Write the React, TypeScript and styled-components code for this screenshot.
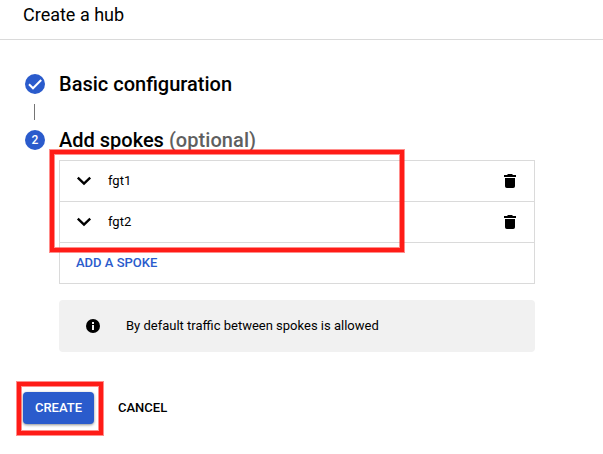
import React from "react";
import styled, { createGlobalStyle } from "styled-components";

const Global = createGlobalStyle`
  * { box-sizing: border-box; }
  body { margin: 0; background: #fff; color: #000; font-family: Roboto, sans-serif; font-size: 13px; overflow: hidden; -webkit-font-smoothing: antialiased; }
`;
const Page = styled.div`
  height: 454px;
  display: flex;
  flex-direction: column;
`;
const Header = styled.header`
  height: 40px;
  flex: none;
  padding: 3px 0 0 23px;
  border-bottom: 1px solid #dadada;
  font-size: 18px;
  line-height: 24px;
`;
const Stepper = styled.main`
  padding: 34px 68px 0 25px;
`;
const Step = styled.div`
  display: flex;
  align-items: center;
  gap: 14px;
  height: 20px;
`;
const Badge = styled.span`
  display: flex;
  align-items: center;
  justify-content: center;
  width: 20px;
  height: 20px;
  border-radius: 50%;
  background: #2a5bcc;
  color: #fff;
  font-size: 12px;
  font-weight: 500;
`;
const Title = styled.h2`
  margin: 0;
  font-size: 20px;
  line-height: 20px;
  font-weight: 500;
  white-space: nowrap;
`;
const Optional = styled.span`
  color: #5f5f5f;
  letter-spacing: 0.06px;
`;
const Connector = styled.div`
  width: 1px;
  height: 16px;
  margin: 10px 0 10px 9px;
  background: #757575;
`;
const Body = styled.section`
  margin: 10px 0 0 34px;
`;
const PanelSlot = styled.div`
  position: relative;
`;
const Panel = styled.div`
  border: 1px solid #dadada;
`;
const Row = styled.div`
  display: flex;
  align-items: center;
  height: 41px;
  padding: 0 16px;
  border-bottom: 1px solid #dadada;
  &:last-child { height: 40px; border-bottom: 0; }
`;
const Name = styled.span`
  flex: 1;
  margin-left: 16px;
  padding-bottom: 2px;
`;
const TextButton = styled.button<{ $tone?: string }>`
  border: 0;
  padding: 0;
  background: none;
  font: 500 13px/16px Roboto, sans-serif;
  color: ${(p) => p.$tone ?? "#000"};
`;
const Notice = styled.div`
  display: flex;
  align-items: center;
  gap: 25px;
  height: 52px;
  margin-top: 16px;
  padding: 0 26px;
  border-radius: 4px;
  background: #f1f1f1;
`;
const NoticeText = styled.span`
  padding-bottom: 2px;
`;
const Actions = styled.footer`
  display: flex;
  align-items: center;
  gap: 24px;
  margin: 40px 0 0 23px;
`;
const ButtonSlot = styled.div`
  position: relative;
`;
const PrimaryButton = styled.button`
  display: block;
  width: 71px;
  height: 32px;
  padding: 0;
  border: 0;
  border-radius: 4px;
  background: #2a5bcc;
  color: #fff;
  font: 500 13px/32px Roboto, sans-serif;
  box-shadow: 0 1px 3px rgba(0, 0, 0, 0.45);
`;
const Highlight = styled.div<{ $inset: string }>`
  position: absolute;
  inset: ${(p) => p.$inset};
  border: 4px solid #ff1c17;
  box-shadow: 0 0 0 1px rgba(255, 28, 23, 0.5), inset 0 0 0 1px rgba(255, 28, 23, 0.5);
  pointer-events: none;
`;

const Check = () => (
  <svg width="20" height="20" viewBox="0 0 20 20">
    <path d="M4 10.3l4 4 8.2-8.3" fill="none" stroke="#fff" strokeWidth="2" />
  </svg>
);
const Chevron = () => (
  <svg width="16" height="16" viewBox="0 0 16 16">
    <path d="M1.8 4.7l6.2 6 6.2-6" fill="none" stroke="#000" strokeWidth="2.4" />
  </svg>
);
const Trash = () => (
  <svg width="16" height="16" viewBox="0 0 16 16">
    <path d="M2 2h3l1-1h4l1 1h3v2H2zM3 5h10v8.2a1.8 1.8 0 0 1-1.8 1.8H4.8A1.8 1.8 0 0 1 3 13.2z" />
  </svg>
);
const Info = () => (
  <svg width="16" height="16" viewBox="0 0 16 16">
    <circle cx="8" cy="8" r="7" />
    <path d="M7 4h2v2H7zM7 7h2v5H7z" fill="#f1f1f1" />
  </svg>
);

const spokes = ["fgt1", "fgt2"];

export default function App() {
  return (
    <Page>
      <Global />
      <Header>Create a hub</Header>
      <Stepper>
        <Step>
          <Badge><Check /></Badge>
          <Title>Basic configuration</Title>
        </Step>
        <Connector />
        <Step>
          <Badge>2</Badge>
          <Title>Add spokes <Optional>(optional)</Optional></Title>
        </Step>
        <Body>
          <PanelSlot>
            <Panel>
              {spokes.map((name) => (
                <Row key={name}>
                  <Chevron />
                  <Name>{name}</Name>
                  <Trash />
                </Row>
              ))}
              <Row><TextButton $tone="#2a5bcc">ADD A SPOKE</TextButton></Row>
            </Panel>
            <Highlight $inset="-10px 131px 32px -9px" />
          </PanelSlot>
          <Notice>
            <Info />
            <NoticeText>By default traffic between spokes is allowed</NoticeText>
          </Notice>
        </Body>
      </Stepper>
      <Actions>
        <ButtonSlot>
          <PrimaryButton>CREATE</PrimaryButton>
          <Highlight $inset="-10px -9px -11px -6px" />
        </ButtonSlot>
        <TextButton>CANCEL</TextButton>
      </Actions>
    </Page>
  );
}
